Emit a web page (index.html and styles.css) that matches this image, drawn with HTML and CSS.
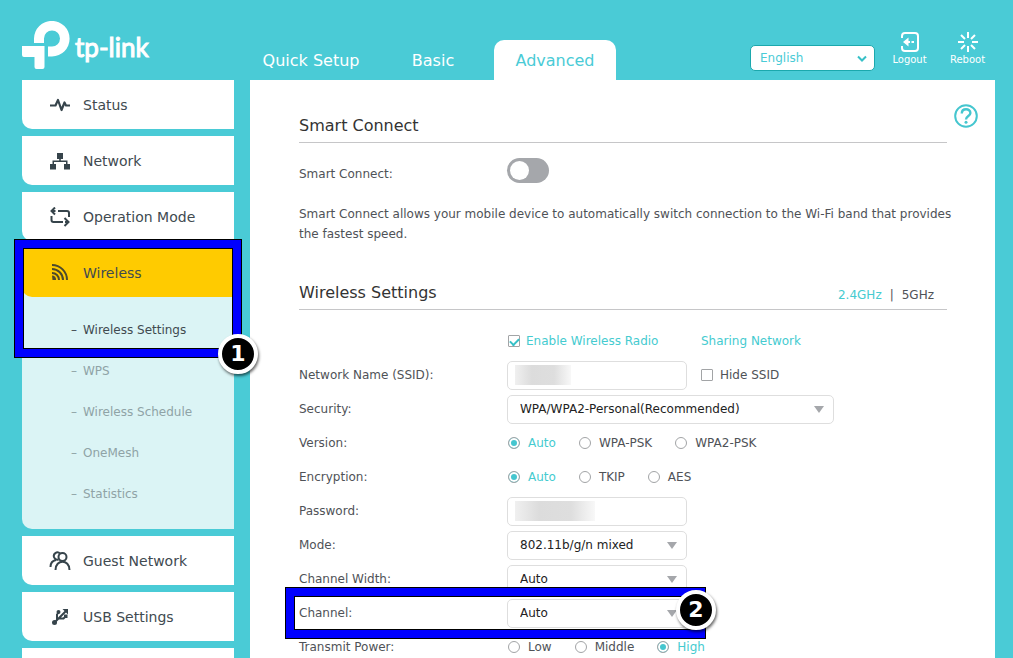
FILE: index.html
```html
<!DOCTYPE html>
<html lang="en">
<head>
  <meta charset="UTF-8">
  <meta name="viewport" content="width=device-width, initial-scale=1.0">
  <title>Wireless Settings</title>
  <link rel="stylesheet" href="styles.css">
</head>
<body>

<header class="header">
  <a class="logo" href="#">
    <svg width="48" height="49" viewBox="0 0 48 49" fill="#fff">
      <path d="M12 22 V17.500 A17.800 17.800 0 1 1 30 35.500 H26 V25.500 H30 A8 8 0 1 0 22 17.500 V22 Z"/>
      <path d="M0 25 H22.500 V46 Q22.500 48 20.500 48 H14.500 Q12.500 48 12.500 46 V36 H2 Q0 36 0 34 Z"/>
    </svg>
    <span>tp-link</span>
  </a>
  <div class="topbar">
    <nav class="tabs">
      <a href="#">Quick Setup</a>
      <a href="#">Basic</a>
      <a href="#" class="active">Advanced</a>
    </nav>
    <div class="tools">
      <div class="language">
        <select aria-label="Language"><option>English</option></select>
        <svg width="10" height="8" viewBox="0 0 10 8" fill="none" stroke="#36c0c7" stroke-width="2"><path d="M1 1.500 L5 5.500 L9 1.500"/></svg>
      </div>
      <button class="tool" type="button">
        <svg width="20" height="20" viewBox="0 0 20 20" fill="none" stroke="#fff" stroke-width="2">
          <path d="M2 6 V4 Q2 1 5 1 H15 Q18 1 18 4 V16 Q18 19 15 19 H5 Q2 19 2 16 V14"/>
          <path d="M8 10 H10 M11.500 10 H14"/>
          <path d="M8.500 5.500 V14.500 L3 10 Z" fill="#fff" stroke="none"/>
        </svg>
        Logout
      </button>
      <button class="tool" type="button">
        <svg width="20" height="20" viewBox="0 0 20 20" fill="none" stroke="#fff" stroke-width="2">
          <path d="M10 0 V6 M10 14 V20 M0 10 H6 M14 10 H20 M3 3 L7 7 M13 13 L17 17 M17 3 L13 7 M7 13 L3 17"/>
        </svg>
        Reboot
      </button>
    </div>
  </div>
</header>

<div class="page">
  <ul class="menu">
    <li>
      <a href="#">
        <svg width="20" height="20" viewBox="0 0 20 20" fill="none" stroke="#36444b" stroke-width="2.200" stroke-linejoin="round"><path d="M0 10.500 H5.500 L8 5 L11.500 15 L14.500 7.500 L16 10.500 H20"/></svg>
        Status
      </a>
    </li>
    <li>
      <a href="#">
        <svg width="20" height="20" viewBox="0 0 20 20" fill="#36444b"><path d="M7 2 H13 V8 H10.800 V9.500 H17.500 V13 H20 V18.500 H14 V13 H16 V11 H4 V13 H6 V18.500 H0 V13 H2.500 V9.500 H9.200 V8 H7 Z"/></svg>
        Network
      </a>
    </li>
    <li>
      <a href="#">
        <svg width="22" height="20" viewBox="0 0 22 20" fill="none" stroke="#36444b" stroke-width="2">
          <path d="M9 4 H18 Q20 4 20 6 V10 M14 15 H4.500 Q2.500 15 2.500 13 V9"/>
          <path d="M6 0.500 L2.500 4 L6 7.500 M2.500 4 H6.500 M15.500 11 L19.500 15 L15.500 19 M19 15 H16"/>
        </svg>
        Operation Mode
      </a>
    </li>
    <li class="open">
      <a href="#">
        <svg width="20" height="20" viewBox="0 0 20 20" fill="none" stroke="#4d4a2c" stroke-width="2">
          <path d="M2 2 A15 15 0 0 1 17 17 M2 6 A11 11 0 0 1 13 17 M2 10 A7 7 0 0 1 9 17"/>
          <path d="M2 12.500 A4 4 0 0 1 6 17 H2.500 Z" fill="#4d4a2c" stroke="none"/>
        </svg>
        Wireless
      </a>
      <ul class="submenu">
        <li><a href="#" class="current">Wireless Settings</a></li>
        <li><a href="#">WPS</a></li>
        <li><a href="#">Wireless Schedule</a></li>
        <li><a href="#">OneMesh</a></li>
        <li><a href="#">Statistics</a></li>
      </ul>
      <div class="marker marker-menu"><span class="step">1</span></div>
    </li>
    <li>
      <a href="#">
        <svg width="20" height="20" viewBox="0 0 20 20" fill="none" stroke="#36444b" stroke-width="2">
          <circle cx="12.500" cy="6" r="4"/>
          <path d="M5.500 19 C5.500 8 19.500 8 19.500 19"/>
          <path d="M8.500 8.500 A3.600 3.600 0 1 1 10 2.500 M0.500 16 C0.500 11.500 3 9.500 6 9"/>
        </svg>
        Guest Network
      </a>
    </li>
    <li>
      <a href="#">
        <svg width="20" height="20" viewBox="0 0 20 20" fill="none" stroke="#36444b" stroke-width="2">
          <path d="M4 16 L16 4 M7 13 V7.500 L9 5 M9 11.500 H13.500 L16 9"/>
          <path d="M12.500 2 H18 V7.500 Z" fill="#36444b" stroke="none"/>
          <circle cx="4.500" cy="15.500" r="2.500" fill="#36444b" stroke="none"/>
          <circle cx="8.500" cy="5" r="2" fill="#36444b" stroke="none"/>
          <path d="M14 7.500 H17.500 V11 H14 Z" fill="#36444b" stroke="none"/>
        </svg>
        USB Settings
      </a>
    </li>
    <li class="blank"></li>
  </ul>

  <main class="content">
    <button class="help" type="button" aria-label="Help">
      <svg width="24" height="24" viewBox="0 0 24 24" fill="none" stroke="#45c6cf" stroke-width="2">
        <circle cx="12" cy="12" r="10.800"/>
        <path d="M7.800 9.500 C7.800 3.800 16.400 4.200 16.400 9 C16.400 12 12 12 12 15.500" stroke-width="2.400"/>
        <circle cx="12" cy="18.300" r="1.500" fill="#45c6cf" stroke="none"/>
      </svg>
    </button>

    <section>
      <div class="title"><h2>Smart Connect</h2></div>
      <div class="row row-top">
        <label for="smart">Smart Connect:</label>
        <input type="checkbox" id="smart" class="toggle">
      </div>
      <p class="note">Smart Connect allows your mobile device to automatically switch connection to the Wi-Fi band that provides the fastest speed.</p>
    </section>

    <section>
      <div class="title">
        <h2>Wireless Settings</h2>
        <div class="bands"><a href="#" class="on">2.4GHz</a><span>|</span><a href="#">5GHz</a></div>
      </div>

      <div class="row">
        <div class="field enable">
          <label class="check on"><input type="checkbox" checked>Enable Wireless Radio</label>
        </div>
        <a class="share" href="#">Sharing Network</a>
      </div>
      <div class="row">
        <label for="ssid">Network Name (SSID):</label>
        <div class="field"><input type="text" id="ssid" class="masked"></div>
        <label class="check"><input type="checkbox">Hide SSID</label>
      </div>
      <div class="row">
        <label for="security">Security:</label>
        <div class="select wide"><select id="security"><option>WPA/WPA2-Personal(Recommended)</option></select></div>
      </div>
      <div class="row" role="radiogroup" aria-labelledby="version">
        <span class="name" id="version">Version:</span>
        <div class="options">
          <label><input type="radio" name="version" checked><span>Auto</span></label>
          <label><input type="radio" name="version"><span>WPA-PSK</span></label>
          <label><input type="radio" name="version"><span>WPA2-PSK</span></label>
        </div>
      </div>
      <div class="row" role="radiogroup" aria-labelledby="encryption">
        <span class="name" id="encryption">Encryption:</span>
        <div class="options">
          <label><input type="radio" name="encryption" checked><span>Auto</span></label>
          <label><input type="radio" name="encryption"><span>TKIP</span></label>
          <label><input type="radio" name="encryption"><span>AES</span></label>
        </div>
      </div>
      <div class="row">
        <label for="password">Password:</label>
        <div class="field"><input type="text" id="password" class="masked long"></div>
      </div>
      <div class="row">
        <label for="mode">Mode:</label>
        <div class="select"><select id="mode"><option>802.11b/g/n mixed</option></select></div>
      </div>
      <div class="row">
        <label for="width">Channel Width:</label>
        <div class="select"><select id="width"><option>Auto</option></select></div>
      </div>
      <div class="row">
        <label for="channel">Channel:</label>
        <div class="select"><select id="channel"><option>Auto</option></select></div>
        <div class="marker marker-channel"><span class="step">2</span></div>
      </div>
      <div class="row" role="radiogroup" aria-labelledby="power">
        <span class="name" id="power">Transmit Power:</span>
        <div class="options">
          <label><input type="radio" name="power"><span>Low</span></label>
          <label><input type="radio" name="power"><span>Middle</span></label>
          <label><input type="radio" name="power" checked><span>High</span></label>
        </div>
      </div>
    </section>
  </main>
</div>

</body>
</html>
```
FILE: styles.css
```css
* {
  box-sizing: border-box;
}

body {
  margin: 0;
  padding: 0 18px 0 22px;
  background-color: #4acbd6;
  font-family: "DejaVu Sans", Verdana, sans-serif;
  font-size: 12px;
  color: #4f5257;
}

a {
  color: inherit;
  text-decoration: none;
}

button, input, select {
  font-family: inherit;
  font-size: inherit;
  margin: 0;
}

ul {
  list-style: none;
  margin: 0;
  padding: 0;
}

/* header */
.header, .page {
  display: grid;
  grid-template-columns: 212px 1fr;
  column-gap: 16px;
}

.header {
  height: 80px;
}

.logo {
  display: flex;
  gap: 5px;
  padding-top: 21px;
  color: #fff;
}

.logo span {
  font-family: Lato, sans-serif;
  font-size: 26px;
  -webkit-text-stroke: 1px #fff;
  line-height: 52px;
}

.topbar {
  display: flex;
  justify-content: space-between;
  align-items: flex-end;
}

.tabs {
  display: flex;
}

.tabs a {
  width: 122px;
  height: 40px;
  line-height: 42px;
  text-align: center;
  font-size: 16px;
  color: #fff;
}

.tabs .active {
  background-color: #fff;
  color: #4acbd6;
  border-radius: 10px 10px 0 0;
}

.tools {
  display: flex;
  align-items: flex-end;
  padding: 0 10px 9px 0;
}

.language {
  position: relative;
  margin-right: 17px;
}

.language select {
  appearance: none;
  display: block;
  width: 125px;
  height: 26px;
  padding: 0 9px;
  border: 1px solid #1ba8ad;
  border-radius: 5px;
  background-color: #fff;
  color: #4acbd6;
}

.language svg {
  position: absolute;
  right: 8px;
  top: 10px;
  pointer-events: none;
}

.tool {
  display: flex;
  flex-direction: column;
  align-items: center;
  gap: 2px;
  width: 35px;
  padding: 0;
  margin-bottom: 5px;
  border: none;
  background: none;
  color: #fff;
  font-size: 10px;
  line-height: 12px;
}

.tool + .tool {
  margin-left: 23px;
}

/* left menu */
.menu {
  position: relative;
  z-index: 1;
}

.menu > li {
  margin-bottom: 7px;
  background-color: #fff;
  border-bottom-left-radius: 10px;
}

.menu > li > a {
  display: flex;
  align-items: center;
  height: 49px;
  padding-left: 27px;
  font-size: 14px;
  color: #414a50;
}

.menu > li > a svg {
  width: 22px;
  height: 20px;
  margin-right: 12px;
}

.menu .blank {
  height: 49px;
}

.menu .open {
  position: relative;
  background-color: #dbf4f5;
}

.menu .open > a {
  background-color: #ffcb00;
  border-bottom-left-radius: 10px;
}

.submenu {
  padding: 13px 0 14px 49px;
}

.submenu a {
  display: block;
  line-height: 41px;
  color: #8fa3a6;
}

.submenu a::before {
  content: "–";
  display: inline-block;
  width: 12px;
}

.submenu .current {
  color: #414a50;
}

/* content */
.content {
  position: relative;
  padding: 35px 48px 0 49px;
  background-color: #fff;
}

.help {
  position: absolute;
  top: 24px;
  right: 17px;
  padding: 0;
  border: none;
  background: none;
}

.help svg {
  display: block;
}

.title {
  display: flex;
  justify-content: space-between;
  align-items: center;
  padding-bottom: 5px;
  margin-bottom: 14px;
  border-bottom: 1px solid #c6c6c8;
}

.title h2 {
  margin: 0;
  font-size: 16px;
  font-weight: normal;
  line-height: 22px;
  color: #333;
}

.bands {
  display: flex;
  gap: 8px;
  padding: 4px 13px 0 0;
}

.note {
  margin: 13px -20px 38px 0;
  line-height: 20px;
}

.row {
  position: relative;
  display: flex;
  align-items: center;
  height: 34px;
}

.row > label:first-child, .name {
  width: 208px;
}

.row-top {
  align-items: flex-start;
  line-height: 34px;
}

.on, .share {
  color: #45cbd0;
}

.field {
  width: 180px;
  margin-right: 14px;
}

.enable {
  margin-left: 208px;
}

input[type="text"], .select select {
  display: block;
  width: 100%;
  height: 29px;
  padding: 0 12px;
  border: 1px solid #dedede;
  border-radius: 5px;
  background-color: #fff;
  color: #222;
}

/* hidden values */
.masked {
  background-image: linear-gradient(90deg, #f0f0f0, #dcdcdc 30%, #dedede 70%, #f8f8f8);
  background-repeat: no-repeat;
  background-position: 7px center;
  background-size: 56px 20px;
}

.masked.long {
  background-size: 80px 20px;
}

.select {
  position: relative;
  width: 180px;
}

.select.wide {
  width: 327px;
}

.select select {
  appearance: none;
}

.select::after {
  content: "";
  position: absolute;
  right: 10px;
  top: 11px;
  border: 5px solid transparent;
  border-top: 7px solid #a5a7ab;
  border-bottom: none;
  pointer-events: none;
}

.check, .options label {
  display: flex;
  align-items: center;
}

.options {
  display: flex;
  gap: 22px;
}

.check input, .options input {
  appearance: none;
  flex: none;
  width: 12px;
  height: 12px;
  margin-right: 7px;
  border: 1px solid #a2a4a6;
  background-color: #fff;
}

.options input {
  margin-right: 8px;
  margin-left: 1px;
  border-radius: 50%;
}

.check input {
  border-radius: 1px;
}

.enable input {
  margin-left: 1px;
  margin-right: 6px;
}

.check input:checked::before {
  content: "";
  display: block;
  width: 7px;
  height: 4px;
  margin: 2px 1px;
  border: solid #36c0c7;
  border-width: 0 0 2px 2px;
  rotate: -45deg;
}

.options input:checked {
  background-color: #45c6cf;
  box-shadow: inset 0 0 0 2px #fff;
}

.options input:checked + span {
  color: #45cbd0;
}

.toggle {
  appearance: none;
  width: 42px;
  height: 25px;
  margin-top: 1px;
  padding: 3px;
  border-radius: 13px;
  background-color: #a5a7ab;
}

.toggle::before {
  content: "";
  display: block;
  width: 19px;
  height: 19px;
  border-radius: 50%;
  background-color: #fff;
}

.toggle:checked {
  background-color: #45c6cf;
}

.toggle:checked::before {
  margin-left: auto;
}

/* numbered frames */
.marker {
  position: absolute;
  border: 8px solid #00f;
  outline: 1px solid #000;
  box-shadow: inset 0 0 0 1px #000;
  pointer-events: none;
}

.marker-menu {
  top: -8px;
  left: -7px;
  right: -7px;
  height: 117px;
}

.marker-channel {
  top: -8px;
  left: -13px;
  width: 419px;
  height: 50px;
}

.step {
  position: absolute;
  right: -25px;
  bottom: -25px;
  width: 40px;
  height: 40px;
  border: 4px solid #fff;
  border-radius: 50%;
  background-color: #000;
  box-shadow: 1px 2px 3px rgba(0, 0, 0, 0.6);
  color: #fff;
  font-size: 22px;
  font-weight: bold;
  line-height: 32px;
  text-align: center;
}

.marker-channel .step {
  right: -19px;
  bottom: 0;
}
```
